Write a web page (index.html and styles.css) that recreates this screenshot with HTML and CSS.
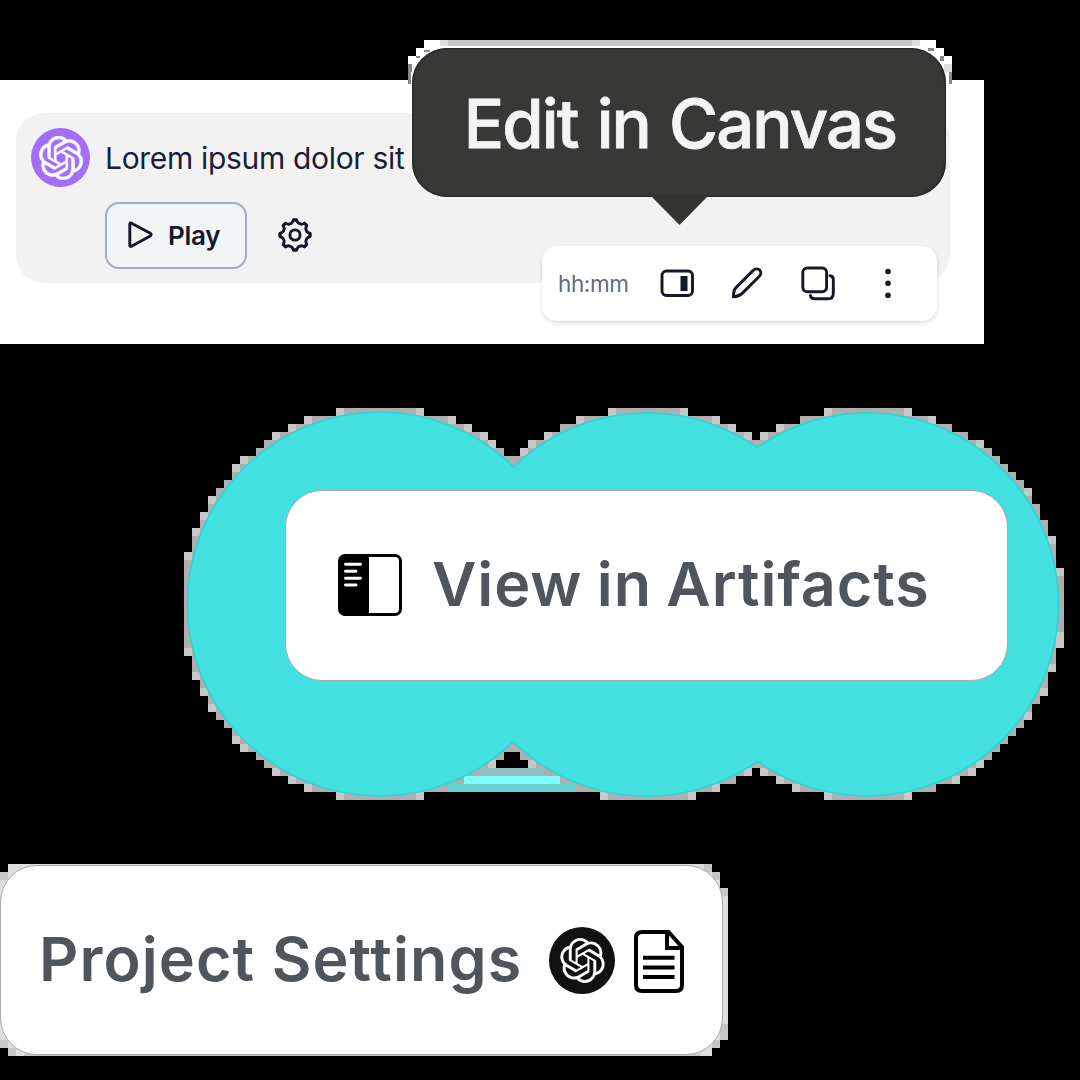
FILE: index.html
```html
<!DOCTYPE html>
<html lang="en">
<head>
<meta charset="utf-8">
<title>Canvas, Artifacts and Project Settings</title>
<link rel="stylesheet" href="styles.css">
</head>
<body>
<svg class="defs" width="0" height="0" aria-hidden="true">
  <symbol id="knot" viewBox="0 0 24 24" overflow="visible"><path d="M22.2819 9.8211a5.9847 5.9847 0 0 0-.5157-4.9108 6.0462 6.0462 0 0 0-6.5098-2.9A6.0651 6.0651 0 0 0 4.9807 4.1818a5.9847 5.9847 0 0 0-3.9977 2.9 6.0462 6.0462 0 0 0 .7427 7.0966 5.98 5.98 0 0 0 .511 4.9107 6.051 6.051 0 0 0 6.5146 2.9001A5.9847 5.9847 0 0 0 13.2599 24a6.0557 6.0557 0 0 0 5.7718-4.2058 5.9894 5.9894 0 0 0 3.9977-2.9001 6.0557 6.0557 0 0 0-.7475-7.0729zm-9.022 12.6081a4.4755 4.4755 0 0 1-2.8764-1.0408l.1419-.0804 4.7783-2.7582a.7948.7948 0 0 0 .3927-.6813v-6.7369l2.02 1.1686a.071.071 0 0 1 .038.052v5.5826a4.504 4.504 0 0 1-4.4945 4.4944zm-9.6607-4.1254a4.4708 4.4708 0 0 1-.5346-3.0137l.142.0852 4.783 2.7582a.7712.7712 0 0 0 .7806 0l5.8428-3.3685v2.3324a.0804.0804 0 0 1-.0332.0615L9.74 19.9502a4.4992 4.4992 0 0 1-6.1408-1.6464zM2.3408 7.8956a4.485 4.485 0 0 1 2.3655-1.9728V11.6a.7664.7664 0 0 0 .3879.6765l5.8144 3.3543-2.0201 1.1685a.0757.0757 0 0 1-.071 0l-4.8303-2.7865A4.504 4.504 0 0 1 2.3408 7.872zm16.5963 3.8558L13.1038 8.364 15.1192 7.2a.0757.0757 0 0 1 .071 0l4.8303 2.7913a4.4944 4.4944 0 0 1-.6765 8.1042v-5.6772a.79.79 0 0 0-.407-.667zm2.0107-3.0231l-.142-.0852-4.7735-2.7818a.7759.7759 0 0 0-.7854 0L9.409 9.2297V6.8974a.0662.0662 0 0 1 .0284-.0615l4.8303-2.7866a4.4992 4.4992 0 0 1 6.6802 4.66zM8.3065 12.863l-2.02-1.1638a.0804.0804 0 0 1-.038-.0567V6.0742a4.4992 4.4992 0 0 1 7.3757-3.4537l-.142.0805L8.704 5.459a.7948.7948 0 0 0-.3927.6813zm1.0976-2.3654l2.602-1.4998 2.6069 1.4998v2.9994l-2.5974 1.4997-2.6067-1.4997Z"/></symbol>
</svg>

<section class="chat">
  <div class="bubble">
    <div class="message">
      <span class="avatar"><svg width="44" height="44"><use href="#knot"/></svg></span>
      <span class="lorem">Lorem ipsum dolor sit</span>
    </div>
    <div class="actions">
      <div class="play">
        <svg width="28" height="30" viewBox="0 0 28 30"><path d="M2.8 4.2 Q2.8 2.5 4.5 3.2 L23.3 13.2 Q25 14.6 23.3 16 L4.5 26.2 Q2.8 27 2.8 25.2Z" class="line"/></svg>
        <span class="play-label">Play</span>
      </div>
      <svg class="gear" width="36" height="36" viewBox="-18 -18 36 36">
        <path id="tooth" class="line" d="M-1.6 -15 H1.6 Q2.6 -12.4 3.4 -11.9 Q4.6 -11.2 6 -10.8 Q6.9 -10.6 9.47 -11.74 L11.74 -9.47"/>
        <use href="#tooth" transform="rotate(45)"/><use href="#tooth" transform="rotate(90)"/><use href="#tooth" transform="rotate(135)"/><use href="#tooth" transform="rotate(180)"/><use href="#tooth" transform="rotate(225)"/><use href="#tooth" transform="rotate(270)"/><use href="#tooth" transform="rotate(315)"/>
        <circle class="line" r="5.1"/>
      </svg>
    </div>
  </div>
  <div class="toolbar">
    <span class="time">hh:mm</span>
    <svg class="tool" width="36" height="36" viewBox="0 0 36 36"><rect class="line" x="3" y="6" width="30.5" height="24.5" rx="4.5"/><rect class="ink" x="21.5" y="11" width="7" height="15"/></svg>
    <svg class="tool" width="36" height="36" viewBox="0 0 36 36"><path class="line" d="M4.4 31.8 C4.4 28 5 24.6 7 22.6 L24.2 5.4 C26.2 3.5 29 3.5 30.6 5.1 C32.3 6.9 32.2 9.4 30.4 11.2 L13.2 28.4 C11.2 30.4 8 31.6 4.4 31.8 Z"/></svg>
    <svg class="tool" width="36" height="36" viewBox="0 0 36 36"><rect class="line" x="2.8" y="3" width="23.8" height="23.8" rx="4.5"/><path class="line" d="M30 10.8 C32.4 11 33.3 12 33.3 14.5 V28.2 C33.3 32 32 33.8 28.2 33.8 H14.5 C12 33.8 10.7 32.8 10.4 30.4"/></svg>
    <svg class="tool" width="36" height="36" viewBox="0 0 36 36"><g class="ink"><circle cx="18" cy="6.5" r="2.8"/><circle cx="18" cy="18.3" r="2.8"/><circle cx="18" cy="30.2" r="2.8"/></g></svg>
  </div>
  <svg class="tip-edge" width="544" height="45" viewBox="408 40 544 45" shape-rendering="crispEdges">
    <path fill="#fff" d="M424 40H936V48H944V56H952V85H408V56H416V48H424Z"/>
    <path fill="#c8c8c8" d="M440 40H912V46H440Z"/>
    <path fill="#dedede" d="M440 40h8v6h-8zM912 40h8v6h-8zM944 64h8v8h-8z"/>
    <path fill="#888" d="M408 64h4v8h-4zM408 72h3v12h-3zM416 56h4v2h-4zM424 50h6v2h-6zM928 48h6v3h-6zM940 56h4v5h-4zM949 72h3v12h-3z"/>
  </svg>
  <div class="tooltip"><span>Edit in Canvas</span></div>
</section>

<section class="artifacts">
  <svg class="cloud" width="1080" height="400" viewBox="0 404 1080 400">
    <g id="fringe" shape-rendering="crispEdges"></g>
    <g shape-rendering="crispEdges">
      <path fill="#93bfbf" d="M480 768H544V776H480Z"/>
      <path fill="#80ffff" d="M464 776H560V784H464Z"/>
      <path fill="#68d2d1" d="M448 784H576V792H448Z"/>
    </g>
    <g class="rim"><circle cx="379.5" cy="604" r="191.8"/><circle cx="647" cy="604.6" r="191.5"/><circle cx="867" cy="604.4" r="191.3"/></g>
    <g class="disc"><circle cx="379.5" cy="604" r="191"/><circle cx="647" cy="604.6" r="190.7"/><circle cx="867" cy="604.4" r="190.5"/></g>
  </svg>
  <div class="card artifacts-card">
    <svg width="64" height="62" viewBox="0 0 64 62">
      <rect x="1.5" y="1.5" width="61" height="59" rx="5.5" fill="#fff" stroke="#000" stroke-width="3"/>
      <path d="M31 1H7Q1 1 1 7V55Q1 61 7 61H31Z"/>
      <path d="M7.5 10.3H22.5M7.5 17.2H18M7.5 24.2H22.5M7.5 31H18" stroke="#fff" stroke-width="2.9" stroke-linecap="round"/>
    </svg>
    <span class="title view-title">View in Artifacts</span>
  </div>
</section>

<section class="project">
  <svg class="project-edge" width="728" height="192" viewBox="0 864 728 192" shape-rendering="crispEdges">
    <path fill="#dedede" d="M8 864H712V872H720V888H728V1040H720V1048H712V1056H8V1048H0V872H8Z"/>
    <path fill="#c6c6c6" d="M0 872h8v8h-8zM0 1040h8v8h-8zM8 1048h8v8h-8zM712 872h8v8h-8zM720 888h8v8h-8zM720 1024h8v16h-8zM712 1040h8v8h-8zM704 864h8v8h-8zM24 1054H700V1056H24Z"/>
  </svg>
  <div class="card project-card">
    <span class="title project-title">Project Settings</span>
    <span class="badge"><svg width="45" height="45"><use href="#knot"/></svg></span>
    <svg class="doc" width="50" height="63" viewBox="0 0 50 63">
      <path d="M8 2H34.5L48 17V55Q48 61 42 61H8Q2 61 2 55V8Q2 2 8 2Z" fill="#fff" stroke="#000" stroke-width="4"/>
      <path d="M33 2V18H48M9 27.8H40.5M9 37.4H40.5M9 46.9H40.5" fill="none" stroke="#000" stroke-width="4"/>
    </svg>
  </div>
</section>
<script src="fringe.js"></script>
</body>
</html>
```
FILE: styles.css
```css
* { box-sizing: border-box; }

body {
  margin: 0;
  width: 1080px;
  height: 1080px;
  overflow: hidden;
  background: #000;
  font-family: Inter, "Liberation Sans", sans-serif;
  display: flex;
  flex-direction: column;
}

svg { display: block; flex: none; }
.defs { position: absolute; }
.line { fill: none; stroke: #14162a; stroke-width: 2.9; stroke-linejoin: round; stroke-linecap: round; }
.ink { fill: #14162a; }

.chat {
  position: relative;
  margin-top: 80px;
  width: 984px;
  height: 264px;
  padding: 33px 34px 0 16px;
  background: #fff;
}

.bubble {
  height: 170px;
  padding: 15px 15px 0;
  border-radius: 28px;
  background: #f2f2f2;
}

.message { display: flex; align-items: center; gap: 15px; height: 59px; }

.avatar {
  display: grid;
  place-items: center;
  width: 59px;
  height: 59px;
  border-radius: 50%;
  background: #a36ffa;
  fill: #fff;
  stroke: #fff;
  stroke-width: .3;
}

.lorem { font-size: 30px; letter-spacing: -.32px; color: #1c1e36; white-space: nowrap; }

.actions { display: flex; align-items: center; gap: 30px; padding: 14.5px 0 0 74px; }

.play {
  display: flex;
  align-items: center;
  gap: 13px;
  width: 142px;
  height: 67px;
  padding-left: 20px;
  border: 2px solid #a3adc5;
  border-radius: 14px;
  background: #f3f4f5;
}

.play-label { font-size: 26px; font-weight: 600; letter-spacing: -.3px; color: #15172b; }
.gear { overflow: visible; }

.toolbar {
  position: absolute;
  left: 542px;
  top: 166px;
  display: flex;
  align-items: center;
  width: 395px;
  height: 75px;
  padding: 0 0 1px 16px;
  border-radius: 15px;
  background: #fff;
  box-shadow: 0 2px 4px rgba(0, 0, 0, .14);
}

.time { flex: none; width: 101px; font-size: 22.5px; letter-spacing: -.4px; color: #626b7f; }
.tool { margin-right: 34.3px; }

.tip-edge { position: absolute; left: 408px; top: -40px; }

.tooltip {
  position: absolute;
  left: 412px;
  top: -32px;
  display: flex;
  align-items: center;
  justify-content: center;
  width: 534px;
  height: 149px;
  border-radius: 35px;
  background: #383837;
  box-shadow: inset 0 0 2px 1px #222;
  font-size: 67px;
  font-weight: 500;
  color: #f4f4f4;
  white-space: nowrap;
}

.tooltip::after {
  content: "";
  position: absolute;
  left: 239px;
  top: 148px;
  width: 57px;
  height: 29px;
  background: #343433;
  clip-path: polygon(0 0, 100% 0, 50% 100%);
}

.tooltip span {
  position: relative;
  top: 1px;
  left: 1px;
  letter-spacing: -1.9px;
  word-spacing: 3px;
  -webkit-text-stroke: .8px #f4f4f4;
}

.artifacts {
  position: relative;
  margin-top: 60px;
  height: 400px;
  padding: 85.5px 0 0 285px;
}

.cloud { position: absolute; left: 0; top: 0; }
.rim circle { fill: none; stroke: #29d9d9; stroke-width: 2; }
.disc circle { fill: #42e0e1; }

.card {
  position: relative;
  display: flex;
  align-items: center;
  border: 1.5px solid #aaa;
  border-radius: 37px;
  background: #fff;
}

.artifacts-card { width: 723px; height: 191px; padding-left: 52px; gap: 30px; }

.title { padding-bottom: 3px; font-size: 61px; font-weight: 600; color: #50555b; white-space: nowrap; }
.view-title { letter-spacing: .95px; word-spacing: -2px; }

.project { position: relative; margin-top: 60px; padding-top: 1px; }
.project-edge { position: absolute; left: 0; top: 0; }
.project-card { width: 723px; height: 190px; border-width: 1px; padding-left: 38px; }
.project-title { width: 510px; letter-spacing: 1.1px; }

.badge {
  display: grid;
  place-items: center;
  width: 66px;
  height: 67px;
  border-radius: 50%;
  background: #111;
  fill: #fff;
}

.doc { margin: 2px 0 0 19px; }
```
FILE: fringe.js
```js
// Pixelated halo: every 8px cell that touches the outline of the three discs.
const discs = [[379.5, 604, 193], [647, 604.7, 192.7], [867, 604.5, 192.6]];
const cell = 8;
const group = document.getElementById("fringe");
for (let y = 400; y < 808; y += cell) {
  for (let x = 176; x < 1072; x += cell) {
    let inside = 0;
    for (let j = 0.25; j < cell; j += 0.5) {
      for (let i = 0.25; i < cell; i += 0.5) {
        if (discs.some(([cx, cy, r]) => Math.hypot(x + i - cx, y + j - cy) < r)) inside++;
      }
    }
    if (inside > 0) {
      const rect = document.createElementNS("http://www.w3.org/2000/svg", "rect");
      rect.setAttribute("x", x);
      rect.setAttribute("y", y);
      rect.setAttribute("width", cell);
      rect.setAttribute("height", cell);
      rect.setAttribute("fill", inside < 40 ? "#c8c8c8" : "#b0adaf");
      group.appendChild(rect);
    }
  }
}
```
